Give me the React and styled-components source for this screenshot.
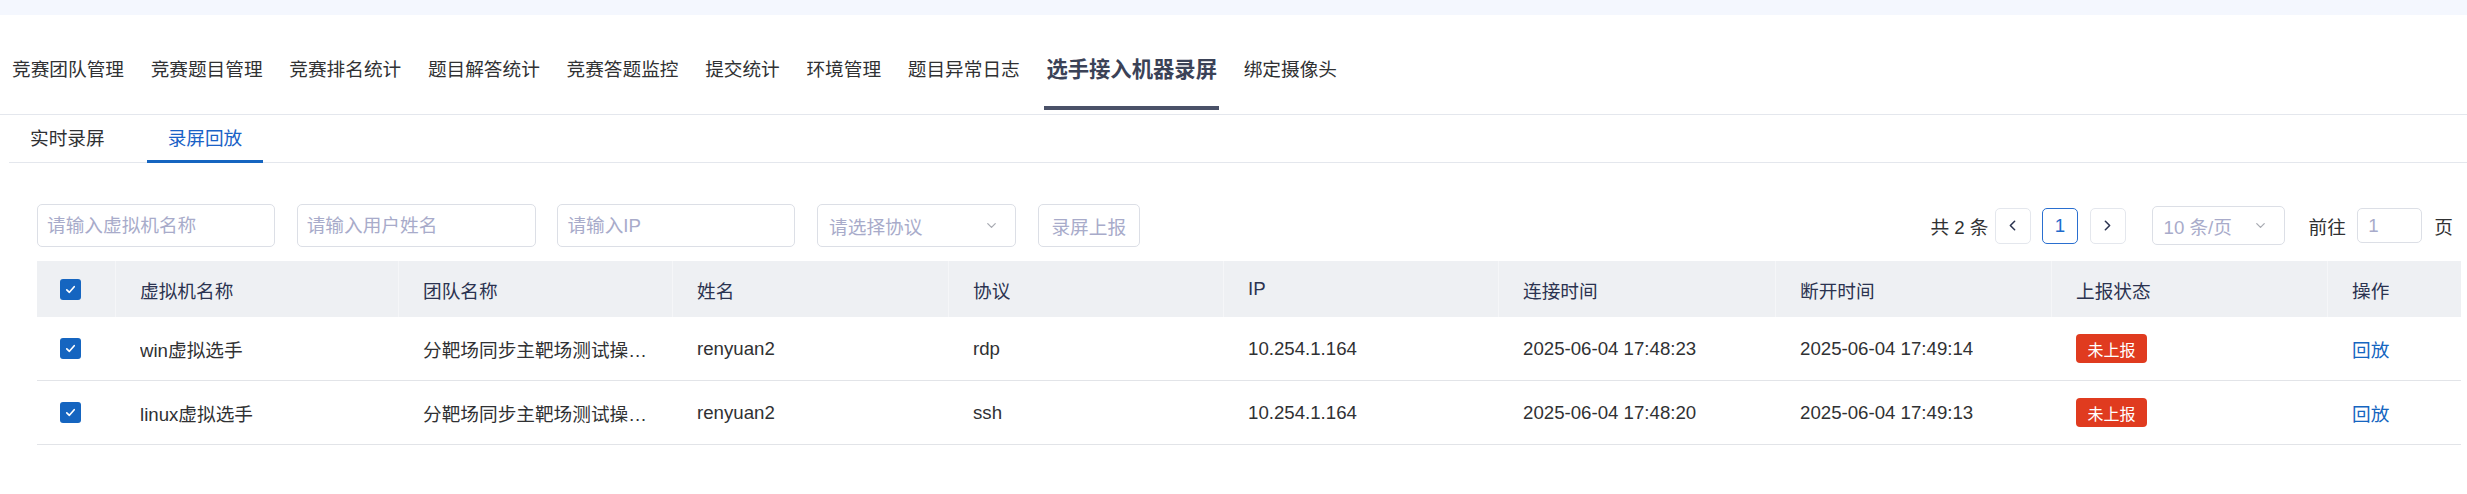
import styled, { createGlobalStyle } from "styled-components";
import { ChevronLeft, ChevronRight, ChevronDown } from "lucide-react";

const GlobalStyle = createGlobalStyle`
  body {
    margin: 0;
    background: #fff;
    font-family: "Liberation Sans", "Noto Sans CJK SC", sans-serif;
    color: #303133;
  }
  * {
    box-sizing: border-box;
  }
`;

const Page = styled.div`
  width: 100%;
  min-height: 494px;
  background: #fff;
`;

const TopBand = styled.div`
  height: 15px;
  background: #f4f7fe;
`;

const MainTabs = styled.div`
  display: flex;
  gap: 22.7px;
  padding-left: 10px;
  border-bottom: 1px solid #e4e7ed;
`;

const MainTab = styled.div`
  padding: 40px 2px 21px;
  margin-bottom: 4px;
  line-height: 30px;
  white-space: nowrap;
  font-size: ${(p) => (p.$active ? "21.33px" : "18.67px")};
  font-weight: ${(p) => (p.$active ? 700 : 400)};
  color: ${(p) => (p.$active ? "#3b4257" : "#303133")};
  border-bottom: 4px solid ${(p) => (p.$active ? "#4a5168" : "transparent")};
`;

const SubTabs = styled.div`
  display: flex;
  gap: 21px;
  margin-left: 9px;
  border-bottom: 1px solid #e4e7ed;
`;

const SubTab = styled.div`
  padding: 9px 21px 6px;
  margin-bottom: -1px;
  line-height: 30px;
  font-size: 18.67px;
  color: ${(p) => (p.$active ? "#1a62c6" : "#303133")};
  border-bottom: 3px solid ${(p) => (p.$active ? "#1565c0" : "transparent")};
`;

const Content = styled.div`
  padding: 41px 6px 0 37px;
`;

const Toolbar = styled.div`
  display: flex;
  justify-content: space-between;
  align-items: center;
  height: 43px;
`;

const Filters = styled.div`
  display: flex;
  gap: 21.7px;
`;

const TextInput = styled.input`
  width: ${(p) => p.$w}px;
  height: 43px;
  padding: 0 9px;
  border: 1px solid #dcdfe6;
  border-radius: 5px;
  font-family: inherit;
  font-size: 18.67px;
  color: #303133;
  outline: none;
  &::placeholder {
    color: #a8abca;
  }
`;

const SelectBox = styled.div`
  width: ${(p) => p.$w}px;
  height: ${(p) => p.$h || 43}px;
  display: flex;
  align-items: center;
  justify-content: space-between;
  padding: 0 16px 0 11px;
  border: 1px solid #dcdfe6;
  border-radius: 5px;
  font-size: 18.67px;
  color: #a8abca;
  white-space: nowrap;
`;

const GhostButton = styled.button`
  width: 102px;
  height: 43px;
  padding: 0;
  border: 1px solid #dcdfe6;
  border-radius: 5px;
  background: #fff;
  font-family: inherit;
  font-size: 18.67px;
  color: #a8abca;
`;

const Pager = styled.div`
  display: flex;
  align-items: center;
  margin-right: 8px;
  font-size: 18.67px;
  color: #303133;
  white-space: nowrap;
`;

const Total = styled.span`
  margin-right: 6px;
`;

const PageBtn = styled.div`
  width: 36px;
  height: 36px;
  display: flex;
  align-items: center;
  justify-content: center;
  margin-right: ${(p) => p.$mr || 0}px;
  border: 1px solid ${(p) => (p.$active ? "#2a6fd0" : "#e4e7ed")};
  border-radius: 5px;
  color: ${(p) => (p.$active ? "#1f6bcc" : "#2b3350")};
  font-size: 18.67px;
`;

const JumpLabel = styled.span`
  margin: 0 ${(p) => p.$mr}px 0 ${(p) => p.$ml}px;
`;

const JumpInput = styled.div`
  width: 65px;
  height: 35px;
  display: flex;
  align-items: center;
  padding-left: 10px;
  border: 1px solid #dcdfe6;
  border-radius: 5px;
  color: #a8abca;
`;

const Table = styled.div`
  margin-top: 14px;
  width: 2424px;
`;

const cols = "79px 283px 274px 276px 275px 275px 277px 276px 276px 133px";

const HeadRow = styled.div`
  display: grid;
  grid-template-columns: ${cols};
  height: 56px;
  background: #eef0f3;
  color: #2b3350;
`;

const BodyRow = styled.div`
  display: grid;
  grid-template-columns: ${cols};
  height: 64px;
  border-bottom: 1px solid #e2e4e8;
  color: #303133;
`;

const Cell = styled.div`
  display: flex;
  align-items: center;
  padding: 0 24px 0 ${(p) => (p.$check ? 23 : 24)}px;
  font-size: 18.67px;
  min-width: 0;
  border-right: 1px solid ${(p) => (p.$head ? "#f5f6f8" : "transparent")};
  &:last-child {
    border-right: none;
  }
`;

const CellText = styled.span`
  display: block;
  overflow: hidden;
  white-space: nowrap;
  text-overflow: ellipsis;
`;

const CheckBox = styled.div`
  width: 21px;
  height: 21px;
  display: flex;
  align-items: center;
  justify-content: center;
  border-radius: 3px;
  background: #1565c0;
`;

const Badge = styled.span`
  display: inline-flex;
  align-items: center;
  justify-content: center;
  width: 71px;
  height: 29px;
  border-radius: 4px;
  background: #e03b1f;
  color: #fff;
  font-size: 16px;
`;

const Link = styled.span`
  color: #1565c0;
  cursor: pointer;
`;

const Check = () => (
  <CheckBox>
    <svg width="13" height="13" viewBox="0 0 14 14" fill="none">
      <path d="M3 7.3 L5.8 10 L11 4" stroke="#fff" strokeWidth="1.8" strokeLinecap="round" strokeLinejoin="round" />
    </svg>
  </CheckBox>
);

const mainTabs = [
  "竞赛团队管理",
  "竞赛题目管理",
  "竞赛排名统计",
  "题目解答统计",
  "竞赛答题监控",
  "提交统计",
  "环境管理",
  "题目异常日志",
  "选手接入机器录屏",
  "绑定摄像头",
];

const heads = ["虚拟机名称", "团队名称", "姓名", "协议", "IP", "连接时间", "断开时间", "上报状态", "操作"];

const rows = [
  {
    vm: "win虚拟选手",
    team: "分靶场同步主靶场测试操作员队",
    user: "renyuan2",
    proto: "rdp",
    ip: "10.254.1.164",
    start: "2025-06-04 17:48:23",
    end: "2025-06-04 17:49:14",
  },
  {
    vm: "linux虚拟选手",
    team: "分靶场同步主靶场测试操作员队",
    user: "renyuan2",
    proto: "ssh",
    ip: "10.254.1.164",
    start: "2025-06-04 17:48:20",
    end: "2025-06-04 17:49:13",
  },
];

export default function App() {
  return (
    <Page>
      <GlobalStyle />
      <TopBand />
      <MainTabs>
        {mainTabs.map((t) => (
          <MainTab key={t} $active={t === "选手接入机器录屏"}>
            {t}
          </MainTab>
        ))}
      </MainTabs>
      <SubTabs>
        <SubTab>实时录屏</SubTab>
        <SubTab $active>录屏回放</SubTab>
      </SubTabs>

      <Content>
        <Toolbar>
          <Filters>
            <TextInput $w={238} placeholder="请输入虚拟机名称" />
            <TextInput $w={239} placeholder="请输入用户姓名" />
            <TextInput $w={238} placeholder="请输入IP" />
            <SelectBox $w={199}>
              <span>请选择协议</span>
              <ChevronDown size={15} strokeWidth={2} color="#a8abb2" />
            </SelectBox>
            <GhostButton>录屏上报</GhostButton>
          </Filters>

          <Pager>
            <Total>共 2 条</Total>
            <PageBtn $mr={11.5}>
              <ChevronLeft size={17} strokeWidth={2.2} />
            </PageBtn>
            <PageBtn $active $mr={11.5}>
              1
            </PageBtn>
            <PageBtn $mr={26}>
              <ChevronRight size={17} strokeWidth={2.2} />
            </PageBtn>
            <SelectBox $w={133} $h={39}>
              <span>10 条/页</span>
              <ChevronDown size={15} strokeWidth={2} color="#a8abb2" />
            </SelectBox>
            <JumpLabel $ml={24} $mr={11.5}>
              前往
            </JumpLabel>
            <JumpInput>1</JumpInput>
            <JumpLabel $ml={12} $mr={0}>
              页
            </JumpLabel>
          </Pager>
        </Toolbar>

        <Table>
          <HeadRow>
            <Cell $head $check>
              <Check />
            </Cell>
            {heads.map((h) => (
              <Cell $head key={h}>
                <CellText>{h}</CellText>
              </Cell>
            ))}
          </HeadRow>
          {rows.map((r) => (
            <BodyRow key={r.vm}>
              <Cell $check>
                <Check />
              </Cell>
              <Cell>
                <CellText>{r.vm}</CellText>
              </Cell>
              <Cell>
                <CellText>{r.team}</CellText>
              </Cell>
              <Cell>
                <CellText>{r.user}</CellText>
              </Cell>
              <Cell>
                <CellText>{r.proto}</CellText>
              </Cell>
              <Cell>
                <CellText>{r.ip}</CellText>
              </Cell>
              <Cell>
                <CellText>{r.start}</CellText>
              </Cell>
              <Cell>
                <CellText>{r.end}</CellText>
              </Cell>
              <Cell>
                <Badge>未上报</Badge>
              </Cell>
              <Cell>
                <Link>回放</Link>
              </Cell>
            </BodyRow>
          ))}
        </Table>
      </Content>
    </Page>
  );
}
